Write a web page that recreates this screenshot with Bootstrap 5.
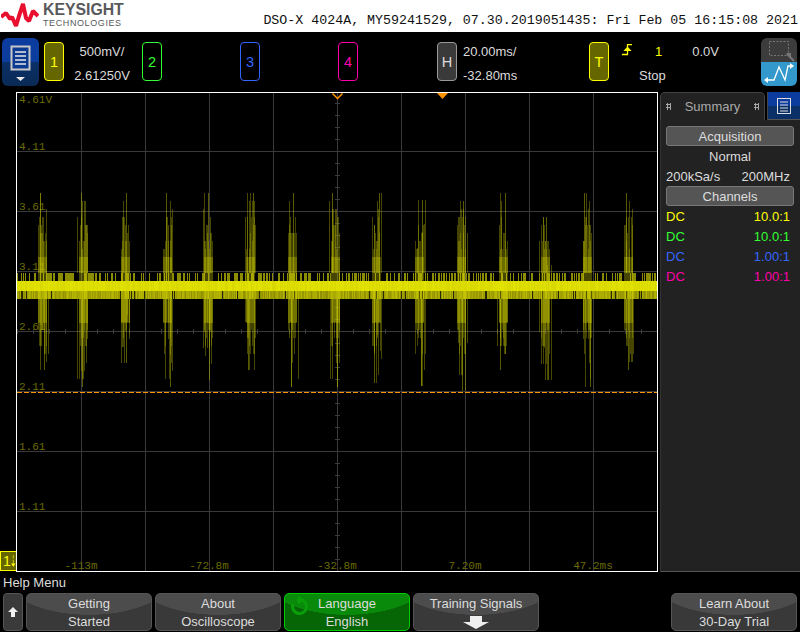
<!DOCTYPE html>
<html lang="en">
<head>
<meta charset="utf-8">
<title>DSO-X 4024A</title>
<link href="https://cdn.jsdelivr.net/npm/bootstrap@5.3.0/dist/css/bootstrap.min.css" rel="stylesheet">
<style>
html,body{width:800px;height:632px;overflow:hidden;background:#000;margin:0}
body{font-family:"Liberation Sans",Arial,sans-serif;font-size:13px;line-height:18px;color:#dcdcdc}
.page-wrap{width:800px;height:632px}
.topbar{height:32px;background:#fff;color:#111}
.logo-wrap{width:43px;height:32px;padding:0 0 0 1px}
.brand-name{font-size:15.8px;line-height:15px;font-weight:700;color:#58595b;padding-top:2px;height:17px}
.brand-sub{font-size:9px;line-height:10px;color:#58595b;letter-spacing:.6px;padding-top:1px}
.scope-title{font-family:"Liberation Mono",monospace;font-size:13.3px;line-height:16px;white-space:pre;padding:13px 2px 0 0;color:#111}
.toolstrip{height:60px;padding-left:2px}
.menu-btn{width:37px;height:48px;margin-top:6px;border-radius:6px;background:linear-gradient(#0c3c9e 0,#0c3c9e 50%,#0b3068 50%,#0a2a55 100%)}
.chan{width:98px;height:60px;padding-left:3px}
.chan-first{margin-left:2px}
.chan-h{margin-left:1px}
.chan-box{width:20px;height:39px;margin-top:10px;border-radius:4px;border:1px solid;font-size:14.5px;flex:none}
.c1{border-color:#ff0;color:#ff0;background:#666600}
.c2{border-color:#3f3;color:#3f3}
.c3{border-color:#36f;color:#36f}
.c4{border-color:#f0a;color:#f0a}
.ch{border-color:#999;color:#ddd;background:#3a3a3a}
.read-col{height:48px;margin-top:8px;width:74px;line-height:24px}
.read-first{padding-left:2px}
.read-h{padding-left:6px}
.spacer-t{width:54px}
.chan-t{width:172px}
.t-grid{height:48px;margin-top:8px;line-height:24px}
.trig-ch{color:#ff0;margin-left:22px}
.trig-lvl{margin-left:30px}
.trig-stop{margin-left:30px}
.zoom-btn{width:36px;height:48px;margin-top:6px;margin-left:auto;margin-right:3px;border-radius:6px;overflow:hidden}
.zoom-top{height:24px;background:#3c3c3c}
.zoom-bot{height:24px;background:#3399cc}
.mainrow{height:480px}
.gutter{width:16px}
.gnd-mark{width:16px;height:20px;margin-bottom:1px;background:#666600;border:1px solid #ff0;border-right:0;color:#ff0;font-size:14px;line-height:18px;padding-left:2px}
.screen{width:642px;height:480px;border:1px solid #fff;background:#000}
.screen svg{display:block}
.side{width:140px;margin-left:2px;height:480px}
.tabbar{height:28px;flex:none}
.sum-tab{width:105px;background:#222;border:1px solid #444;border-bottom:0;border-radius:5px 5px 0 0;color:#aaa;font-size:13px;line-height:27px;padding:0 5px}
.grip{width:5px;height:7px;background-image:radial-gradient(#aaa 50%,transparent 55%);background-size:3px 3px}
.blue-tab{width:33px;margin-left:2px;background:linear-gradient(#0c3c9e 0,#0c3c9e 50%,#0b3068 50%);border-bottom:1px solid #555;border-left:1px solid #444}
.sidebody{background:#222;padding:6px 6px 0 5px;border-bottom:1px solid #555;border-left:1px solid #333;font-size:13px}
.sect{height:20px;background:#555;border:1px solid #777;border-radius:3px;line-height:20px;color:#ddd}
.siderow{height:20px;line-height:22px}
.sr-yellow{color:#ff0}.sr-green{color:#3f3}.sr-blue{color:#36f}.sr-pink{color:#f0a}
.helpline{height:21px;padding:2px 0 0 3px;line-height:17px;color:#ddd;font-size:13px}
.keys{height:38px;padding-left:3px;padding-right:3px;gap:3px}
.upkey{width:20px;height:38px;border:1px solid #555;border-radius:4px;background:#3a3a3a}
.softkey{width:126px;height:38px;padding:1px 0 0;border:1px solid #555;border-radius:5px;color:#dcdcdc;font-size:13px;line-height:18px;background:radial-gradient(85px 39.5px at 50% -18.5px,#4c4c4c 99%,#393939 100%);--bs-btn-border-color:#555}
.softkey.on{border-color:#0c0;background:radial-gradient(85px 39.5px at 50% -18.5px,#0a8a0a 99%,#066606 100%);position:relative}
.spin{position:absolute;left:2px;top:2px}
.dn-arrow{margin-top:3px;margin-bottom:2px}
.ax{font-family:"Liberation Mono",monospace;font-size:11px;fill:#6b6b00}
</style>
</head>
<body>
<div class="page-wrap d-flex flex-column">

  <div class="topbar d-flex">
    <div class="logo-wrap">
      <svg width="38" height="32" viewBox="0 0 38 32"><polyline fill="none" stroke="#e8102e" stroke-width="4" stroke-linejoin="bevel" points="0,17 5,13 9,19 11,17 15,26 18,16 22,4 25,18 28,21 32,11 37,16"/></svg>
    </div>
    <div class="d-flex flex-column">
      <div class="brand-name">KEYSIGHT</div>
      <div class="brand-sub">TECHNOLOGIES</div>
    </div>
    <div class="scope-title ms-auto">DSO-X 4024A, MY59241529, 07.30.2019051435: Fri Feb 05 16:15:08 2021</div>
  </div>

  <div class="toolstrip d-flex">
    <div class="menu-btn d-flex flex-column align-items-center">
      <svg width="37" height="48" viewBox="0 0 37 48"><rect x="9.5" y="8.5" width="18" height="23" fill="#0b3a90" stroke="#c8c8c8" stroke-width="2"/><path d="M13 14h11M13 18h11M13 22h11M13 26h11" stroke="#e8e8e8" stroke-width="1.6"/><path d="M14 39h9l-4.500 4z" fill="#e8e8e8"/></svg>
    </div>
    <div class="chan chan-first d-flex">
      <div class="chan-box c1 d-flex align-items-center justify-content-center">1</div>
      <div class="read-col read-first d-flex flex-column text-center"><span>500mV/</span><span>2.61250V</span></div>
    </div>
    <div class="chan d-flex"><div class="chan-box c2 d-flex align-items-center justify-content-center">2</div></div>
    <div class="chan d-flex"><div class="chan-box c3 d-flex align-items-center justify-content-center">3</div></div>
    <div class="chan d-flex"><div class="chan-box c4 d-flex align-items-center justify-content-center">4</div></div>
    <div class="chan chan-h d-flex">
      <div class="chan-box ch d-flex align-items-center justify-content-center">H</div>
      <div class="read-col read-h d-flex flex-column"><span>20.00ms/</span><span>-32.80ms</span></div>
    </div>
    <div class="chan spacer-t d-flex"></div>
    <div class="chan chan-t d-flex">
      <div class="chan-box c1 d-flex align-items-center justify-content-center">T</div>
      <div class="t-grid d-flex flex-column">
        <div class="d-flex">
          <svg class="mt-1 ms-2" width="16" height="16" viewBox="0 0 16 16"><path d="M5 10.500h5.500V.5H15" fill="none" stroke="#ff0" stroke-width="1.300"/><path d="M6.500 7l4-4.500 4 4.500z" fill="#ff0"/></svg>
          <span class="trig-ch">1</span><span class="trig-lvl">0.0V</span>
        </div>
        <div class="trig-stop">Stop</div>
      </div>
    </div>
    <div class="zoom-btn d-flex flex-column">
      <div class="zoom-top"><svg width="36" height="24" viewBox="0 0 36 24"><rect x="8.500" y="3.500" width="19" height="14" fill="none" stroke="#777" stroke-dasharray="2 1.500"/><path d="M26 16l7 7" stroke="#777" stroke-width="2"/><path d="M25 15h5v5z" fill="#777"/></svg></div>
      <div class="zoom-bot"><svg width="36" height="24" viewBox="0 0 36 24"><path d="M6 18h7l5-13 6 13 3-14h5" fill="none" stroke="#fff" stroke-width="1.300"/><path d="M7 15l-4 3 4 3zM29 1l4 3-4 3z" fill="#fff"/></svg></div>
    </div>
  </div>

  <div class="mainrow d-flex">
    <div class="gutter d-flex flex-column justify-content-end">
      <div class="gnd-mark d-flex justify-content-between"><span>1</span><svg width="8" height="18" viewBox="0 0 8 18"><path d="M3.500 0v5M3.500 7v8" stroke="#ff0"/><path d="M0 13h7l-3.500 5z" fill="#ff0"/></svg></div>
    </div>
    <div class="screen">
      <svg id="scope" width="640" height="478" viewBox="0 0 640 478" xmlns="http://www.w3.org/2000/svg">
        <g id="grid"></g>
        <g class="labels">
          <text class="ax" x="2" y="10">4.61V</text>
          <text class="ax" x="2" y="57">4.11</text>
          <text class="ax" x="2" y="117">3.61</text>
          <text class="ax" x="2" y="177">3.11</text>
          <text class="ax" x="2" y="237">2.61</text>
          <text class="ax" x="2" y="297">2.11</text>
          <text class="ax" x="2" y="357">1.61</text>
          <text class="ax" x="2" y="417">1.11</text>
          <text class="ax" x="64" y="476" text-anchor="middle">-113m</text>
          <text class="ax" x="192" y="476" text-anchor="middle">-72.8m</text>
          <text class="ax" x="320" y="476" text-anchor="middle">-32.8m</text>
          <text class="ax" x="448" y="476" text-anchor="middle">7.20m</text>
          <text class="ax" x="576" y="476" text-anchor="middle">47.2ms</text>
        </g>
        <g id="wave"></g>
        <line x1="0" x2="640" y1="299.500" y2="299.500" stroke="#ff9400" stroke-width="1" stroke-dasharray="5 2"/>
        <path d="M315.500 0.500l5 5 5-5" fill="none" stroke="#ff9400" stroke-width="1.500"/>
        <path d="M420 0h11l-5.500 6z" fill="#ff9400"/>
      </svg>
    </div>
    <div class="side d-flex flex-column">
      <div class="tabbar d-flex">
        <div class="sum-tab d-flex justify-content-between align-items-center">
          <span class="grip"></span><span>Summary</span><span class="grip"></span>
        </div>
        <div class="blue-tab d-flex align-items-center justify-content-center">
          <svg width="14" height="16" viewBox="0 0 14 16"><rect x=".5" y=".5" width="13" height="15" fill="none" stroke="#ddd"/><path d="M3 4h8M3 7h8M3 10h8M3 13h8" stroke="#ddd"/></svg>
        </div>
      </div>
      <div class="sidebody flex-grow-1 d-flex flex-column">
        <div class="sect text-center">Acquisition</div>
        <div class="siderow text-center">Normal</div>
        <div class="siderow d-flex justify-content-between pe-1"><span>200kSa/s</span><span>200MHz</span></div>
        <div class="sect text-center">Channels</div>
        <div class="siderow sr-yellow d-flex justify-content-between pe-1"><span>DC</span><span>10.0:1</span></div>
        <div class="siderow sr-green d-flex justify-content-between pe-1"><span>DC</span><span>10.0:1</span></div>
        <div class="siderow sr-blue d-flex justify-content-between pe-1"><span>DC</span><span>1.00:1</span></div>
        <div class="siderow sr-pink d-flex justify-content-between pe-1"><span>DC</span><span>1.00:1</span></div>
      </div>
    </div>
  </div>

  <div class="helpline">Help Menu</div>

  <div class="keys d-flex">
    <div class="upkey d-flex align-items-center justify-content-center">
      <svg width="12" height="12" viewBox="0 0 12 12"><path d="M6 1l5 5H8v5H4V6H1z" fill="#f0f0f0"/></svg>
    </div>
    <button type="button" class="btn softkey">Getting<br>Started</button>
    <button type="button" class="btn softkey">About<br>Oscilloscope</button>
    <button type="button" class="btn softkey on">
      <svg class="spin" width="24" height="20" viewBox="0 0 24 20"><path d="M6 8a7 7 0 1 0 4-4M11 1l4 3-4 3" fill="none" stroke="#0a9e0a" stroke-width="3"/></svg>
      Language<br>English</button>
    <button type="button" class="btn softkey">Training Signals<br>
      <svg width="26" height="13" viewBox="0 0 26 13" class="dn-arrow d-block mx-auto"><path d="M7 0h12v6h7L13 13 0 6h7z" fill="#eee"/></svg>
    </button>
    <button type="button" class="btn softkey ms-auto">Learn About<br>30-Day Trial</button>
  </div>
</div>

<script>
(function(){
  var seed=12345;
  function r(){seed=(seed*1664525+1013904223)>>>0;return seed/4294967296;}
  function rect(x,y,w,h,c,o){return '<rect x="'+x+'" y="'+y+'" width="'+w+'" height="'+h+'" fill="'+c+'"'+(o?' opacity="'+o+'"':'')+'/>';}
  var g='',i,j,G='#3a3a3a';
  for(i=64;i<640;i+=64)g+=rect(i,0,1,478,G);
  for(i=58;i<478;i+=60)g+=rect(0,i,640,1,G);
  for(i=0;i<640;i+=16)g+=rect(i,236,1,5,G);
  for(i=10;i<478;i+=12)g+=rect(318,i,5,1,G);
  document.getElementById('grid').innerHTML=g;

  var O=93,w='';
  function Y(s){return s-O;}
  for(i=0;i<640;i++){
    if(r()<.45)w+=rect(i,Y(273),1,8,'#8c8c00');
    if(r()<.93){var sh=140+Math.floor(r()*45);w+=rect(i,Y(291),1,8,'rgb('+sh+','+sh+',0)');}
    else w+=rect(i,Y(291),1,8,'#2a2a00');
    var b=216+Math.floor(r()*12);
    w+=rect(i,Y(281),1,10,'rgb('+b+','+b+',0)');
  }
  var bursts=[[25,193,370],[66,193,387],[108,193,363],[150,193,387],[191,193,380],
              [233,193,370],[275,193,387],[318,193,387],[359,193,383],[402,200,386],
              [444,201,391],[486,193,370],[528,217,380],[570,193,387],[611,193,370]];
  var steps=[0,8,16,24,32,48,64];
  bursts.forEach(function(B){
    var c=B[0];
    w+=rect(c+Math.floor(r()*7)-3,Y(B[1]),1,80,'#c8c800','.45');
    w+=rect(c+Math.floor(r()*7)-3,Y(299),1,B[2]-299,'#c8c800','.45');
    for(j=-6;j<=6;j++){
      var a=Math.abs(j),x=c+j;
      if(r()<.85-a*.09){
        var t=B[1]+steps[Math.floor(r()*6)],s=B[2]-steps[Math.floor(r()*6)];
        if(r()<.75)w+=rect(x,Y(t),1,273-t,'#b8b800','.38');
        if(r()<.75)w+=rect(x,Y(299),1,s-299,'#b8b800','.38');
      }
      if(a<5&&r()<.9){
        var mt=217+Math.floor(r()*5)*8,mb=322+Math.floor(r()*5)*8;
        w+=rect(x,Y(mt),1,273-mt,'#c0c000','.34');
        w+=rect(x,Y(299),1,mb-299,'#c0c000','.34');
      }
      if(a<5){
        w+=rect(x,Y(257),1,16,'#e0e000','.28');
        w+=rect(x,Y(273),1,8,'#e8e800','.3');
        w+=rect(x,Y(291),1,8,'#e8e800','.25');
        w+=rect(x,Y(299),1,24,'#e0e000','.3');
      }
    }
  });
  document.getElementById('wave').innerHTML=w;
})();
</script>
<script src="https://cdn.jsdelivr.net/npm/bootstrap@5.3.0/dist/js/bootstrap.bundle.min.js"></script>
</body>
</html>
